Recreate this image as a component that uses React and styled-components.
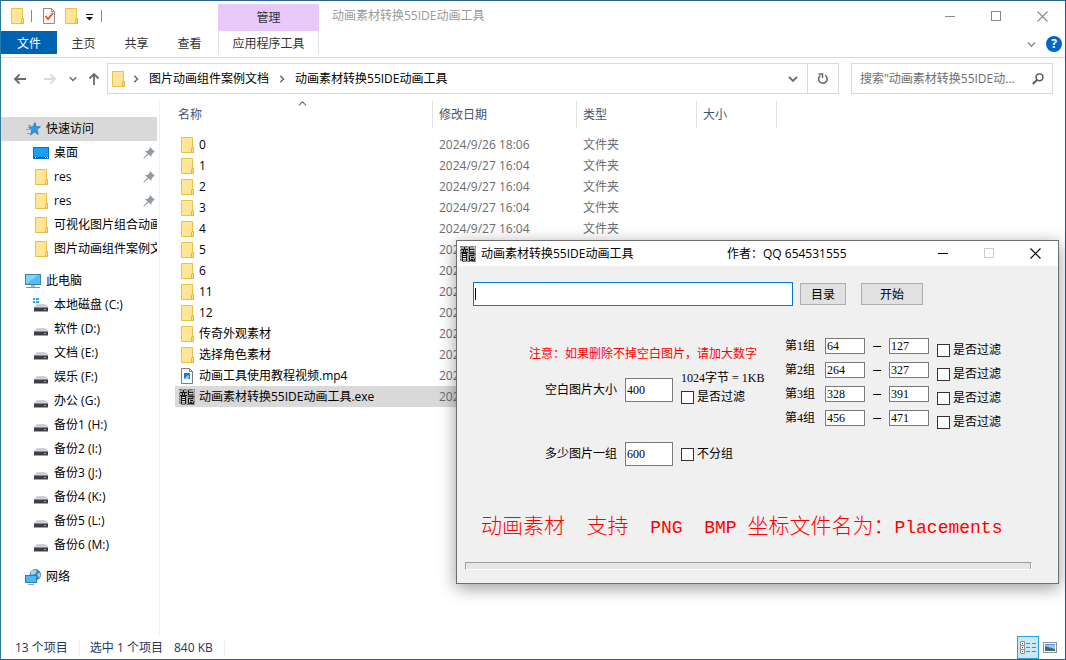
import React, { useState } from "react";
import styled, { createGlobalStyle, css } from "styled-components";

const UI_FONT = `"Open Sans", "Noto Sans CJK SC", sans-serif`;
const FORM_FONT = `"Liberation Serif", "Noto Sans CJK SC", serif`;

const GlobalStyle = createGlobalStyle`
  *,
  *::before,
  *::after {
    box-sizing: border-box;
  }

  body {
    margin: 0;
    background: #fff;
    color: #000;
    font: 12px/16px ${UI_FONT};
  }

  button,
  input {
    margin: 0;
    padding: 0;
    border: 0;
    border-radius: 0;
    outline: none;
    background: none;
    color: inherit;
    font: inherit;
  }

  a {
    color: inherit;
    text-decoration: none;
  }

  svg {
    display: block;
    flex: none;
  }
`;

/* ---------- icons ---------- */

const FolderIcon = () => (
  <svg width="16" height="16" viewBox="0 0 16 16">
    <path d="M2.5 0.5h11v10h1v5h-12z" fill="#ffe594" stroke="#e9c14a" />
    <path d="M12.5 15V11.5q0-1 1-1h1V15.5h-2z" fill="#ffdf7c" stroke="#e3b53a" />
  </svg>
);

const CheckDocIcon = () => (
  <svg width="16" height="16" viewBox="0 0 16 16">
    <path d="M2.5 0.5h8l3 3v12h-11z" fill="#f7f7f7" stroke="#8b8b8b" />
    <path d="M10.5 0.5v3h3" fill="none" stroke="#8b8b8b" />
    <path d="M4.5 8l2.5 3L12 5" fill="none" stroke="#e8501e" strokeWidth="1.8" />
  </svg>
);

const MenuCaretIcon = () => (
  <svg width="10" height="16" viewBox="0 0 10 16">
    <path d="M1 6h7v1H1zM1 9h7L4.5 12.5z" fill="#111" />
  </svg>
);

const VideoIcon = () => (
  <svg width="16" height="16" viewBox="0 0 16 16">
    <path d="M2.5 0.5h8l3 3v12h-11z" fill="#fff" stroke="#7c7c7c" />
    <path d="M10.5 0.5v3h3" fill="none" stroke="#7c7c7c" />
    <rect x="5" y="5" width="6" height="6" fill="#1a78d8" />
    <path d="M5 11l4-4 1 1v2l-1 1z" fill="#8ecbff" />
  </svg>
);

const DragonIcon = () => (
  <svg width="16" height="16" viewBox="0 0 16 16" aria-hidden="true">
    <rect width="16" height="16" fill="#a2a2a2" />
    <path
      d="M0 .5h3M5 .5h2M10 .5h3M15 .5h1M0 4.500h1M0 7.500h1M14 7.500h2M0 10.500h1M15 12.500h1M0 13.500h1M3 15.500h3M8 15.500h2M12 15.500h3"
      stroke="#707070"
    />
    <path
      d="M5 4.500h1M3 8.500h3M3 10.500h3M3 12.500h3M10 4.500h3M10 9.500h3M10 11.500h4M0 2.500h1M14 1.500h1M0 15.500h2"
      stroke="#dedede"
    />
    <path
      d="M4.500 1v2M1 3.500h7M3.500 4v2M5.500 4v2M1 6.500h7M2.500 7v8M2 7.500h5M6.500 7v8M3 9.500h3M3 11.500h3M9.500 1v5h5M9 3.500h5M9 7.500h5v2H9.500v5h5v-2M11 11.500h3M11 13.500h2"
      fill="none"
      stroke="#181818"
    />
  </svg>
);

const StarIcon = () => (
  <svg width="16" height="16" viewBox="0 0 16 16">
    <path
      d="M10 1.500l1.200 4 4.300.3-3.500 2.600 1.200 5-3.700-2.400-3.900 3.100 1.200-5L3.500 6.200l4.300-.4z"
      fill="#2f9be6"
      stroke="#1a72b8"
      strokeWidth=".7"
    />
    <path d="M3 4.500h3M1 8.500h4M2 12.500h3" stroke="#57aee8" strokeWidth="1" />
  </svg>
);

const DesktopIcon = () => (
  <svg width="16" height="16" viewBox="0 0 16 16">
    <rect x=".5" y="2.500" width="15" height="11" fill="#18a0fb" stroke="#0a6fc2" />
    <path d="M1 12.500h14" stroke="#0b4f8a" />
    <path d="M2 12.500h1M12 12.500h1M14 12.500h1" stroke="#fff" />
  </svg>
);

const ComputerIcon = () => (
  <svg width="16" height="16" viewBox="0 0 16 16">
    <rect x=".5" y="1.500" width="15" height="10" fill="#55bdf5" stroke="#3f7ea8" />
    <path d="M1 11V2h12z" fill="#84d3fb" />
    <path d="M6 12h4v2H6z" fill="#a9bac6" />
    <path d="M1 14.500h14" stroke="#7a98ac" />
  </svg>
);

const DriveIcon = ({ system }) => (
  <svg width="16" height="16" viewBox="0 0 16 16">
    {system && (
      <path d="M0 1h2v2H0zM3 1h3v2H3zM0 4h2v2H0zM3 4h3v2H3z" fill="#19b5f1" />
    )}
    <path d="M4 7h8l3 3H1z" fill="#cdd0d4" />
    <path d="M1 10h14v1H1z" fill="#8a8d90" />
    <path d="M1 11h14v3H1z" fill="#3c4044" />
    <path d="M1 14.500h14" stroke="#a5a8ab" />
    <rect x="11" y="12" width="2" height="1" fill="#4be34b" />
  </svg>
);

const NetworkIcon = () => (
  <svg width="16" height="16" viewBox="0 0 16 16">
    <circle cx="10.300" cy="5.700" r="5.700" fill="#4785ab" />
    <path d="M6 2q3-2 6 0l-2 3-4 1zM12 5l3-1q1 3-1 5z" fill="#b3d3e2" />
    <rect x=".5" y="6.500" width="11" height="7" fill="#4ab8f6" stroke="#2f7fb0" />
    <path d="M3 15.500h6" stroke="#8aa9bd" />
  </svg>
);

const PinIcon = () => (
  <svg width="12" height="12" viewBox="0 0 12 12">
    <path d="M7 0l5 5-1.500.5-2 2V10L5.500 7.500 1 11.500 0 12l.5-1L4.500 6.500 2 4h2.500l2-2z" fill="#8f9aa3" />
  </svg>
);

const Arrow = ({ dir = "left", color = "#6a6a6a" }) => {
  const turn = { left: 0, up: 90, right: 180 }[dir];

  return (
    <svg width="14" height="14" viewBox="0 0 14 14">
      <path
        d="M13 7H2M6.500 2.500L2 7l4.500 4.500"
        fill="none"
        stroke={color}
        strokeWidth="1.8"
        transform={`rotate(${turn} 7 7)`}
      />
    </svg>
  );
};

const Chevron = ({ size = 8, dir = "down", color = "#6a6a6a", width = 1.5 }) => {
  const turn = { down: 0, up: 180, right: -90 }[dir];

  return (
    <svg width={size} height={size} viewBox="0 0 8 8">
      <path
        d="M0.800 2.300L4 5.500l3.200-3.200"
        fill="none"
        stroke={color}
        strokeWidth={width}
        transform={`rotate(${turn} 4 4)`}
      />
    </svg>
  );
};

const RefreshIcon = () => (
  <svg width="12" height="12" viewBox="0 0 12 12">
    <path d="M8 2.200A4.300 4.300 0 1 1 3.200 2.600" fill="none" stroke="#666" strokeWidth="1.500" />
    <path d="M1.500 1h4v4" fill="none" stroke="#666" strokeWidth="1.500" />
  </svg>
);

const SearchIcon = () => (
  <svg width="12" height="12" viewBox="0 0 12 12">
    <circle cx="7.500" cy="4.300" r="3.400" fill="none" stroke="#555" strokeWidth="1.400" />
    <path d="M5 6.800L.8 11" stroke="#555" strokeWidth="1.800" />
  </svg>
);

const MinimizeIcon = () => (
  <svg width="11" height="11" viewBox="0 0 11 11">
    <path d="M0 5.500h10" stroke="currentColor" />
  </svg>
);

const MaximizeIcon = () => (
  <svg width="11" height="11" viewBox="0 0 11 11">
    <rect x=".5" y=".5" width="9" height="9" fill="none" stroke="currentColor" />
  </svg>
);

const CloseIcon = () => (
  <svg width="11" height="11" viewBox="0 0 11 11">
    <path d="M.5.5l10 10M10.500.5l-10 10" stroke="currentColor" strokeWidth="1.100" />
  </svg>
);

const DetailsViewIcon = () => (
  <svg width="16" height="14" viewBox="0 0 16 14">
    <path d="M.5.5h4v12h-4zM.5 4.500h4M.5 8.500h4" fill="#fff" stroke="#909090" />
    <path d="M2 2.500h1M2 6.500h1M2 10.500h1" stroke="#444" />
    <path d="M6 2.500h4M12 2.500h4M6 6.500h4M12 6.500h4M6 10.500h4M12 10.500h4" stroke="#6d7f8a" />
  </svg>
);

const ThumbViewIcon = () => (
  <svg width="14" height="12" viewBox="0 0 14 12">
    <rect x=".5" y=".5" width="13" height="10" fill="#fff" stroke="#909090" />
    <rect x="2" y="2" width="10" height="7" fill="#9cc7f0" />
    <path d="M2 4l3 1 7 2v2H2z" fill="#3d6b6f" />
    <path d="M2 2h10v1H2z" fill="#4d8ee0" />
  </svg>
);

/* ---------- explorer window ---------- */

const Explorer = styled.div`
  position: relative;
  display: flex;
  flex-direction: column;
  min-height: 100vh;
  border: 1px solid;
  border-color: #2a6596 #2b4d8c #2b5f97 #2b7ba6;
  overflow: hidden;
`;

const Ribbon = styled.header`
  display: grid;
  grid-template: 30px 26px / 217px 101px 1fr;
  border-bottom: 1px solid #dadada;
`;

const QuickAccess = styled.div`
  display: flex;
  align-items: center;
  gap: 6px;
  padding-left: 8px;
`;

const QuickDivider = styled.span`
  width: 1px;
  height: 12px;
  margin-right: 3px;
  background: #8a8a8a;
`;

const IconButton = styled.button`
  display: flex;
  align-items: center;
  justify-content: center;
`;

const ContextTab = styled.div`
  display: flex;
  align-items: center;
  justify-content: center;
  margin-top: 3px;
  background: #e9c9fb;
  color: #333;
`;

const Caption = styled.div`
  display: flex;
  align-items: center;
  padding-left: 13px;
  color: #999;
`;

const CaptionButtons = styled.div`
  display: flex;
  align-self: stretch;
  margin-left: auto;
`;

const CaptionButton = styled(IconButton)`
  width: 46px;
  color: ${({ $color }) => $color};
`;

const Tabs = styled.nav`
  display: flex;
  height: 23px;
`;

const Tab = styled.button`
  width: 53px;
  padding-top: 2px;
  color: #333;

  ${({ $primary }) =>
    $primary &&
    css`
      width: 56px;
      background: #0063b1;
      color: #fff;
    `}
`;

const ToolTab = styled.button`
  height: 23px;
  padding-top: 2px;
  border: solid #e2e2e2;
  border-width: 0 1px;
  color: #333;
`;

const RibbonEnd = styled.div`
  display: flex;
  align-items: center;
  justify-content: flex-end;
  gap: 10px;
  padding-right: 3px;
`;

const HelpButton = styled.button`
  width: 16px;
  height: 16px;
  border-radius: 50%;
  background: #0067c4;
  color: #fff;
  font-weight: 700;
`;

const AddressRow = styled.div`
  display: flex;
  padding: 5px 12px 7px 0;
`;

const NavButtons = styled.div`
  display: flex;
  align-items: center;
  width: 106px;
  padding-left: 12px;
`;

const NavButton = styled(IconButton)`
  width: ${({ $width = 14 }) => $width}px;
  margin-right: ${({ $after = 0 }) => $after}px;
`;

const AddressBox = styled.div`
  display: flex;
  flex: 1;
  align-items: center;
  height: 31px;
  border: 1px solid #d9d9d9;
  padding-left: 2px;
`;

const Crumb = styled.a`
  margin: 0 9px;
`;

const AddressToggle = styled(IconButton)`
  width: 28px;
  height: 29px;
  margin-left: auto;
`;

const RefreshButton = styled(IconButton)`
  width: 31px;
  height: 29px;
  border-left: 1px solid #d9d9d9;
`;

const SearchBox = styled.label`
  display: flex;
  align-items: center;
  width: 202px;
  height: 31px;
  margin-left: 12px;
  padding: 0 8px;
  border: 1px solid #d9d9d9;
`;

const SearchInput = styled.input`
  flex: 1;
  min-width: 0;

  &::placeholder {
    color: #6d6d6d;
    opacity: 1;
  }
`;

const Content = styled.div`
  display: flex;
  flex: 1;
`;

const Sidebar = styled.nav`
  display: flex;
  flex-direction: column;
  flex: none;
  gap: 8px;
  width: 159px;
  padding: 16px 2px 0 0;
  border-right: 1px solid #f0f0f0;
`;

const SidebarItem = styled.a`
  display: flex;
  align-items: center;
  gap: 5px;
  height: 24px;
  padding: 0 2px 0 ${({ $nested }) => ($nested ? 32 : 24)}px;
  background: ${({ $selected }) => ($selected ? "#d9d9d9" : "none")};
  white-space: nowrap;
  overflow: hidden;

  > svg:last-child:not(:first-child) {
    margin-left: auto;
  }
`;

const FileTable = styled.table`
  width: 602px;
  height: max-content;
  margin-left: 15px;
  border-collapse: separate;
  border-spacing: 0;
  table-layout: fixed;
`;

const HeadCell = styled.th`
  position: relative;
  width: ${({ $width }) => $width}px;
  height: 27px;
  padding: 0 0 0 ${({ $first }) => ($first ? 3 : 6)}px;
  border-right: 1px solid #e2e2e2;
  color: #44546f;
  font-weight: 400;
  text-align: left;
`;

const SortMark = styled.span`
  position: absolute;
  top: -2px;
  left: 123px;
`;

const Spacer = styled.tr`
  height: 6px;
`;

const FileRow = styled.tr`
  height: 21px;
  background: ${({ $selected }) => ($selected ? "#d9d9d9" : "none")};
`;

const FileCell = styled.td`
  padding: 0 0 0 ${({ $name }) => ($name ? 4 : 6)}px;
  color: ${({ $name }) => ($name ? "#000" : "#6d6d6d")};
  white-space: nowrap;
`;

const FileName = styled.span`
  display: flex;
  align-items: center;
  gap: 4px;
`;

const StatusBar = styled.footer`
  display: flex;
  align-items: center;
  height: 23px;
  padding: 0 8px 0 14px;
  color: #22375b;
`;

const StatusText = styled.span`
  padding-right: 11px;
  margin-right: ${({ $divided }) => ($divided ? 10 : 0)}px;
  border-right: ${({ $divided }) => ($divided ? "1px solid #ececec" : "0")};
`;

const ViewButtons = styled.div`
  display: flex;
  align-self: stretch;
  align-items: center;
  gap: 4px;
  margin-left: auto;
`;

const ViewButton = styled(IconButton)`
  ${({ $active }) =>
    $active &&
    css`
      width: 22px;
      height: 23px;
      border: 1px solid #26a0da;
      background: #cbe8f6;
    `}
`;

/* ---------- converter dialog ---------- */

const Dialog = styled.section`
  position: absolute;
  top: 239px;
  left: 455px;
  width: 603px;
  border: 1px solid #6e6e6e;
  background: #f0f0f0;
  box-shadow: 0 4px 16px rgba(0, 0, 0, 0.4);
  font-family: ${FORM_FONT};
`;

const DialogTitle = styled.header`
  display: flex;
  align-items: center;
  height: 25px;
  padding-left: 3px;
  background: #fff;
  font-family: ${UI_FONT};
`;

const DialogName = styled.span`
  width: 246px;
  margin-left: 5px;
`;

const PathRow = styled.div`
  display: flex;
  align-items: center;
  padding: 16px 135px 0 16px;
`;

const PathInput = styled.input`
  flex: 1;
  min-width: 0;
  height: 24px;
  padding: 0 1px;
  border: 1px solid #0078d7;
  background: #fff;

  /* steady text cursor while the field is empty */
  &:placeholder-shown {
    background: linear-gradient(#000, #000) 1px 5px / 1px 12px no-repeat #fff;
    caret-color: transparent;
  }
`;

const PushButton = styled.button`
  width: ${({ $wide }) => ($wide ? 62 : 46)}px;
  height: 22px;
  margin-left: ${({ $wide }) => ($wide ? 15 : 7)}px;
  padding-top: 2px;
  border: 1px solid #adadad;
  background: #e1e1e1;
`;

const Options = styled.div`
  display: flex;
  padding-left: 72px;
`;

const SizeOptions = styled.div`
  width: 256px;
  padding-top: 40px;
`;

const Notice = styled.p`
  margin: 0 0 8px;
  color: #f00;
`;

const OptionRow = styled.div`
  display: flex;
  align-items: center;
  gap: 8px;
  height: ${({ $tall }) => ($tall ? 40 : 24)}px;
  margin-bottom: ${({ $tall }) => ($tall ? 32 : 0)}px;
  padding-left: 16px;
`;

const OptionLabel = styled.label`
  width: 72px;
  white-space: nowrap;
`;

const OptionStack = styled.div`
  display: flex;
  flex-direction: column;
  align-self: flex-start;
  gap: 3px;
  white-space: nowrap;
`;

const NumberInput = styled.input`
  width: ${({ $large }) => ($large ? 48 : 40)}px;
  height: ${({ $large }) => ($large ? 24 : 16)}px;
  padding: 0 1px;
  border: 1px solid #7a7a7a;
  background: #fff;
`;

const CheckLabel = styled.label`
  display: flex;
  align-items: center;
  gap: 3px;
  height: 16px;
`;

const CheckBox = styled.input`
  appearance: none;
  width: 13px;
  height: 13px;
  border: 1px solid #333;
  background: #fff;

  &:checked {
    box-shadow: inset 0 0 0 2px #fff;
    background: #333;
  }
`;

const GroupList = styled.div`
  display: flex;
  flex-direction: column;
  gap: 8px;
  padding-top: 32px;
`;

const FilterList = styled(GroupList)`
  padding: 36px 0 0 8px;
`;

const GroupRow = styled.div`
  display: flex;
  align-items: center;
  height: 16px;
`;

const GroupLabel = styled.label`
  width: 40px;
  white-space: nowrap;
`;

const Dash = styled.span`
  width: 8px;
  height: 1px;
  margin: 0 8px;
  background: #000;
`;

const Banner = styled.p`
  margin: 42px 0 22px;
  padding-left: 24px;
  color: #f00;
  font: 300 21px/32px "Noto Sans CJK SC", sans-serif;
  white-space: pre;
`;

const BannerLatin = styled.span`
  font: 18px "Liberation Mono", monospace;
`;

const Progress = styled.progress`
  display: block;
  appearance: none;
  width: calc(100% - 34px);
  height: 8px;
  margin: 0 26px 13px 8px;
  border: 1px solid;
  border-color: #a0a0a0 #fff #fff #a0a0a0;

  &::-webkit-progress-bar {
    border-right: 1px solid #a0a0a0;
    background: #e6e6e6;
  }

  &::-webkit-progress-value {
    background: #06b025;
  }
`;

/* ---------- data ---------- */

const PINNED = [
  { name: "桌面", icon: <DesktopIcon />, pinned: true },
  { name: "res", icon: <FolderIcon />, pinned: true },
  { name: "res", icon: <FolderIcon />, pinned: true },
  { name: "可视化图片组合动画", icon: <FolderIcon /> },
  { name: "图片动画组件案例文档", icon: <FolderIcon /> },
];

const DRIVES = [
  "本地磁盘 (C:)",
  "软件 (D:)",
  "文档 (E:)",
  "娱乐 (F:)",
  "办公 (G:)",
  "备份1 (H:)",
  "备份2 (I:)",
  "备份3 (J:)",
  "备份4 (K:)",
  "备份5 (L:)",
  "备份6 (M:)",
];

const DATE = "2024/9/27 16:04";

const FILES = [
  { name: "0", date: "2024/9/26 18:06", type: "文件夹" },
  { name: "1", type: "文件夹" },
  { name: "2", type: "文件夹" },
  { name: "3", type: "文件夹" },
  { name: "4", type: "文件夹" },
  { name: "5" },
  { name: "6" },
  { name: "11" },
  { name: "12" },
  { name: "传奇外观素材" },
  { name: "选择角色素材" },
  { name: "动画工具使用教程视频.mp4", icon: <VideoIcon /> },
  { name: "动画素材转换55IDE动画工具.exe", icon: <DragonIcon /> },
];

const GROUPS = [
  ["64", "127"],
  ["264", "327"],
  ["328", "391"],
  ["456", "471"],
];

const WindowControls = ({ color, maximizeColor = color }) => (
  <CaptionButtons>
    <CaptionButton aria-label="最小化" $color={color}>
      <MinimizeIcon />
    </CaptionButton>
    <CaptionButton aria-label="最大化" $color={maximizeColor}>
      <MaximizeIcon />
    </CaptionButton>
    <CaptionButton aria-label="关闭" $color={color}>
      <CloseIcon />
    </CaptionButton>
  </CaptionButtons>
);

const Check = ({ children }) => (
  <CheckLabel>
    <CheckBox type="checkbox" />
    {children}
  </CheckLabel>
);

const ConverterDialog = () => (
  <Dialog>
    <DialogTitle>
      <DragonIcon />
      <DialogName>动画素材转换55IDE动画工具</DialogName>
      <span>作者：QQ 654531555</span>
      <WindowControls color="#000" maximizeColor="#ccc" />
    </DialogTitle>
    <PathRow>
      <PathInput aria-label="素材目录" placeholder=" " autoFocus />
      <PushButton>目录</PushButton>
      <PushButton $wide>开始</PushButton>
    </PathRow>
    <Options>
      <SizeOptions>
        <Notice>注意：如果删除不掉空白图片，请加大数字</Notice>
        <OptionRow $tall>
          <OptionLabel htmlFor="blank-size">空白图片大小</OptionLabel>
          <NumberInput id="blank-size" $large defaultValue="400" />
          <OptionStack>
            <span>1024字节 = 1KB</span>
            <Check>是否过滤</Check>
          </OptionStack>
        </OptionRow>
        <OptionRow>
          <OptionLabel htmlFor="group-size">多少图片一组</OptionLabel>
          <NumberInput id="group-size" $large defaultValue="600" />
          <Check>不分组</Check>
        </OptionRow>
      </SizeOptions>
      <GroupList>
        {GROUPS.map(([from, to], i) => (
          <GroupRow key={from}>
            <GroupLabel htmlFor={`group-${i}`}>第{i + 1}组</GroupLabel>
            <NumberInput id={`group-${i}`} defaultValue={from} />
            <Dash />
            <NumberInput aria-label={`第${i + 1}组结束`} defaultValue={to} />
          </GroupRow>
        ))}
      </GroupList>
      <FilterList>
        {GROUPS.map(([from]) => (
          <Check key={from}>是否过滤</Check>
        ))}
      </FilterList>
    </Options>
    <Banner>
      动画素材<BannerLatin>{"  "}</BannerLatin>支持
      <BannerLatin>{"  PNG  BMP "}</BannerLatin>坐标文件名为：
      <BannerLatin>Placements</BannerLatin>
    </Banner>
    <Progress value="0" max="100" aria-label="转换进度" />
  </Dialog>
);

const App = () => {
  const [selected, setSelected] = useState(FILES.length - 1);

  return (
    <>
      <GlobalStyle />
      <Explorer>
        <Ribbon>
          <QuickAccess>
            <FolderIcon />
            <QuickDivider />
            <IconButton aria-label="属性">
              <CheckDocIcon />
            </IconButton>
            <IconButton aria-label="新建文件夹">
              <FolderIcon />
            </IconButton>
            <IconButton aria-label="自定义快速访问工具栏">
              <MenuCaretIcon />
            </IconButton>
            <QuickDivider />
          </QuickAccess>
          <ContextTab>管理</ContextTab>
          <Caption>
            动画素材转换55IDE动画工具
            <WindowControls color="#8a8a8a" />
          </Caption>
          <Tabs>
            <Tab $primary>文件</Tab>
            <Tab>主页</Tab>
            <Tab>共享</Tab>
            <Tab>查看</Tab>
          </Tabs>
          <ToolTab>应用程序工具</ToolTab>
          <RibbonEnd>
            <IconButton aria-label="展开功能区">
              <Chevron size={9} color="#8a8a8a" width={1.2} />
            </IconButton>
            <HelpButton aria-label="帮助">?</HelpButton>
          </RibbonEnd>
        </Ribbon>

        <AddressRow>
          <NavButtons>
            <NavButton aria-label="后退" $after={16}>
              <Arrow />
            </NavButton>
            <NavButton aria-label="前进" $after={12}>
              <Arrow dir="right" color="#d9d9d9" />
            </NavButton>
            <NavButton aria-label="最近浏览的位置" $width={8} $after={10}>
              <Chevron />
            </NavButton>
            <NavButton aria-label="上移">
              <Arrow dir="up" />
            </NavButton>
          </NavButtons>
          <AddressBox>
            <NavButton as="span" $width={16} $after={6}>
              <FolderIcon />
            </NavButton>
            <Chevron dir="right" />
            <Crumb href="#parent">图片动画组件案例文档</Crumb>
            <Chevron dir="right" />
            <Crumb href="#current">动画素材转换55IDE动画工具</Crumb>
            <AddressToggle aria-label="以前的位置">
              <Chevron size={10} />
            </AddressToggle>
            <RefreshButton aria-label="刷新">
              <RefreshIcon />
            </RefreshButton>
          </AddressBox>
          <SearchBox>
            <SearchInput aria-label="搜索" placeholder={'搜索"动画素材转换55IDE动...'} />
            <SearchIcon />
          </SearchBox>
        </AddressRow>

        <Content>
          <Sidebar>
            <div>
              <SidebarItem href="#quick" $selected>
                <StarIcon />
                快速访问
              </SidebarItem>
              {PINNED.map(({ name, icon, pinned }, i) => (
                <SidebarItem href="#folder" key={i} $nested>
                  {icon}
                  {name}
                  {pinned && <PinIcon />}
                </SidebarItem>
              ))}
            </div>
            <div>
              <SidebarItem href="#computer">
                <ComputerIcon />
                此电脑
              </SidebarItem>
              {DRIVES.map((name, i) => (
                <SidebarItem href="#drive" key={name} $nested>
                  <DriveIcon system={i === 0} />
                  {name}
                </SidebarItem>
              ))}
            </div>
            <SidebarItem href="#network">
              <NetworkIcon />
              网络
            </SidebarItem>
          </Sidebar>

          <FileTable>
            <thead>
              <tr>
                <HeadCell $width={258} $first>
                  名称
                  <SortMark>
                    <Chevron size={9} dir="up" width={1} />
                  </SortMark>
                </HeadCell>
                <HeadCell $width={144}>修改日期</HeadCell>
                <HeadCell $width={120}>类型</HeadCell>
                <HeadCell $width={80}>大小</HeadCell>
              </tr>
            </thead>
            <tbody>
              <Spacer />
              {FILES.map(({ name, date = DATE, type, icon = <FolderIcon /> }, i) => (
                <FileRow
                  key={name}
                  $selected={i === selected}
                  onClick={() => setSelected(i)}
                >
                  <FileCell $name>
                    <FileName>
                      {icon}
                      {name}
                    </FileName>
                  </FileCell>
                  <FileCell>{date}</FileCell>
                  <FileCell>{type}</FileCell>
                  <FileCell />
                </FileRow>
              ))}
            </tbody>
          </FileTable>
        </Content>

        <StatusBar>
          <StatusText $divided>{FILES.length} 个项目</StatusText>
          <StatusText>选中 1 个项目</StatusText>
          <StatusText $divided>840 KB</StatusText>
          <ViewButtons>
            <ViewButton aria-label="详细信息" $active>
              <DetailsViewIcon />
            </ViewButton>
            <ViewButton aria-label="大图标">
              <ThumbViewIcon />
            </ViewButton>
          </ViewButtons>
        </StatusBar>

        <ConverterDialog />
      </Explorer>
    </>
  );
};

export default App;
